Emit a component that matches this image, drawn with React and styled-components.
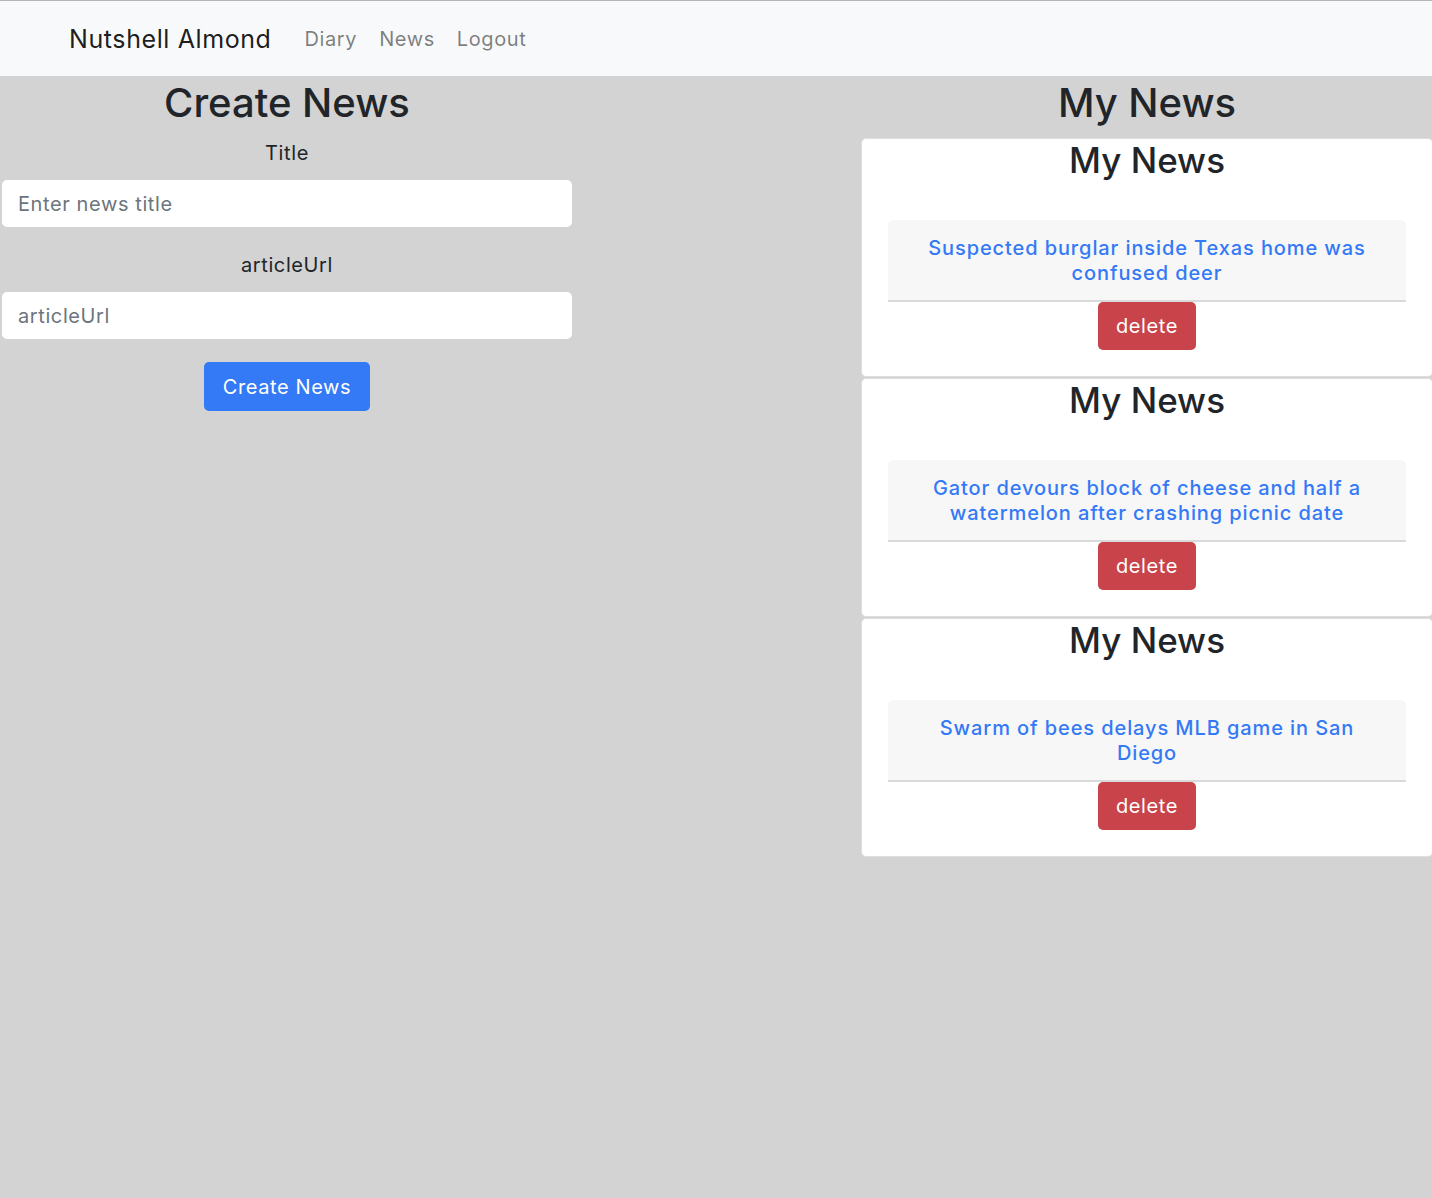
import React, { useState } from 'react';
import styled, { createGlobalStyle } from 'styled-components';

const GlobalStyle = createGlobalStyle`
  body {
    margin: 0;
    background-color: #d3d3d3;
    font-family: Inter, 'Noto Sans', 'Liberation Sans', sans-serif;
    color: #212529;
    letter-spacing: 0.6px;
    overflow-x: hidden;
  }
  * {
    box-sizing: border-box;
  }
`;

const news = [
  { id: 1, title: 'Suspected burglar inside Texas home was confused deer' },
  { id: 2, title: 'Gator devours block of cheese and half a watermelon after crashing picnic date' },
  { id: 3, title: 'Swarm of bees delays MLB game in San Diego' },
];

export default function App() {
  const [articles, setArticles] = useState(news);
  const [title, setTitle] = useState('');
  const [url, setUrl] = useState('');

  const handleDelete = (id) => {
    setArticles((prev) => prev.filter((a) => a.id !== id));
  };

  return (
    <>
      <GlobalStyle />
      <Navbar>
        <Brand href='#'>Nutshell Almond</Brand>
        <NavLinks>
          <NavLink href='#'>Diary</NavLink>
          <NavLink href='#'>News</NavLink>
          <NavLink href='#'>Logout</NavLink>
        </NavLinks>
      </Navbar>
      <Main>
        <FormColumn>
          <Heading>Create News</Heading>
          <Label htmlFor='title'>Title</Label>
          <Input
            id='title'
            placeholder='Enter news title'
            value={title}
            onChange={(e) => setTitle(e.target.value)}
          />
          <Label htmlFor='articleUrl'>articleUrl</Label>
          <Input
            id='articleUrl'
            placeholder='articleUrl'
            value={url}
            onChange={(e) => setUrl(e.target.value)}
          />
          <PrimaryButton type='button'>Create News</PrimaryButton>
        </FormColumn>
        <ListColumn>
          <Heading>My News</Heading>
          {articles.map((article) => (
            <Card key={article.id}>
              <CardTitle>My News</CardTitle>
              <CardHeader>
                <ArticleLink href='#'>{article.title}</ArticleLink>
              </CardHeader>
              <DangerButton type='button' onClick={() => handleDelete(article.id)}>
                delete
              </DangerButton>
            </Card>
          ))}
        </ListColumn>
      </Main>
    </>
  );
}

const Navbar = styled.nav`
  display: flex;
  align-items: center;
  height: 76px;
  padding: 0 69px;
  background-color: #f8f9fa;
  border-top: 1px solid #b5b5b5;
`;

const Brand = styled.a`
  font-size: 25px;
  color: rgba(0, 0, 0, 0.9);
  text-decoration: none;
  margin-right: 33px;
`;

const NavLinks = styled.div`
  display: flex;
  gap: 22px;
`;

const NavLink = styled.a`
  font-size: 20px;
  color: rgba(0, 0, 0, 0.5);
  text-decoration: none;
`;

const Main = styled.main`
  display: flex;
  justify-content: space-between;
  margin-right: -1px;
`;

const FormColumn = styled.section`
  width: 574px;
  display: flex;
  flex-direction: column;
  align-items: center;
`;

const ListColumn = styled.section`
  width: 572px;
  display: flex;
  flex-direction: column;
  align-items: stretch;
`;

const Heading = styled.h2`
  margin: 3px 0 11px;
  font-size: 40px;
  font-weight: 500;
  line-height: 48px;
  letter-spacing: 0;
  text-align: center;
`;

const Label = styled.label`
  display: block;
  font-size: 20px;
  line-height: 30px;
  margin-bottom: 12px;
`;

const Input = styled.input`
  align-self: flex-start;
  width: 570px;
  height: 47px;
  margin: 0 0 23px 2px;
  padding: 0 16px;
  border: none;
  border-radius: 5px;
  background: #fff;
  font-family: inherit;
  font-size: 20px;
  letter-spacing: 0.6px;
  color: #495057;
  outline: none;
  &::placeholder {
    color: #6c757d;
  }
`;

const PrimaryButton = styled.button`
  width: 166px;
  height: 49px;
  border: none;
  border-radius: 5px;
  background-color: #3479f6;
  color: #fff;
  font-family: inherit;
  font-size: 20px;
  letter-spacing: 0.6px;
  cursor: pointer;
`;

const Card = styled.div`
  display: flex;
  flex-direction: column;
  align-items: center;
  margin-bottom: 1px;
  padding: 0 26px 26px;
  background-color: #fff;
  border: 1px solid #dedede;
  border-radius: 5px;
`;

const CardTitle = styled.h3`
  margin: 0 0 39px;
  font-size: 35px;
  font-weight: 500;
  line-height: 42px;
  letter-spacing: 0;
`;

const CardHeader = styled.div`
  align-self: stretch;
  padding: 16px 25px 14px;
  background-color: #f7f7f7;
  border-bottom: 2px solid #dadada;
  border-radius: 5px 5px 0 0;
  text-align: center;
  line-height: 24px;
`;

const ArticleLink = styled.a`
  font-size: 20px;
  font-weight: 500;
  letter-spacing: 0.9px;
  color: #3479f6;
  text-decoration: none;
`;

const DangerButton = styled.button`
  width: 98px;
  height: 48px;
  border: none;
  border-radius: 5px;
  background-color: #c9444a;
  color: #fff;
  font-family: inherit;
  font-size: 20px;
  letter-spacing: 0.6px;
  cursor: pointer;
`;
